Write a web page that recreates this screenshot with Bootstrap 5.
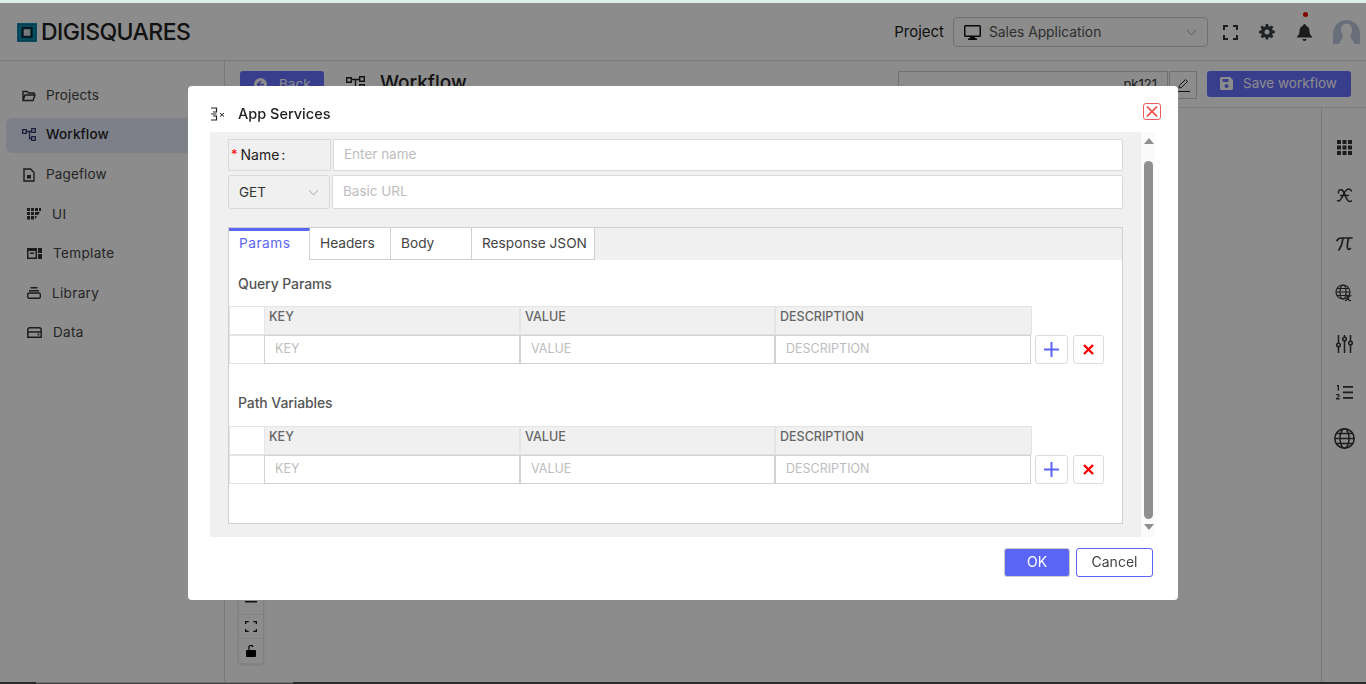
<!DOCTYPE html>
<html lang="en">
<head>
<meta charset="utf-8">
<title>App Services</title>
<link rel="stylesheet" href="https://cdn.jsdelivr.net/npm/bootstrap@5.3.0/dist/css/bootstrap.min.css">
<style>
html,body{height:684px;overflow:hidden;}
body{font-family:"Inter","Liberation Sans",sans-serif;font-size:14px;color:#333;background:#fff;}
.strip-top{height:3px;background:#dcefe6;position:relative;z-index:1060;flex:none;}
.strip-bottom{height:2px;background:#2b2b2b;position:relative;z-index:1060;flex:none;}
.strip-mid{width:257px;margin-left:36px;height:2px;background:#444;border-top:1px solid #6e6e6e;}
.shell{height:684px;}
.app-head{height:58px;border-bottom:1px solid #d9d9d9;padding:1px 6px 0 17px;flex:none;}
.logo-text{font-size:23px;font-weight:500;letter-spacing:-.55px;color:#222;margin-left:4px;line-height:1;}
.proj-label{font-size:15px;color:#222;margin-right:9px;}
.proj-select{width:255px;height:30px;border:1px solid #ccc;border-radius:4px;padding:0 10px;margin-right:15px;font-size:13.8px;color:#555;}
.proj-select svg.chev{margin-left:auto;}
.ico-fs{margin-right:21px;}
.ico-gear{margin-right:22px;}
.bell-wrap{position:relative;margin-right:21px;}
.bell-dot{position:absolute;left:6px;top:-12px;width:5px;height:5px;border-radius:50%;background:#e00;}
.body-row{min-height:0;}
.side-col{width:225px;border-right:1px solid #d9d9d9;padding-top:17px;padding-left:6px;flex:none;}
.side-item{height:35px;margin-bottom:4.5px;padding-left:16px;border-radius:6px 0 0 6px;font-size:13.5px;letter-spacing:.15px;color:#444;gap:10px;}
.side-item.on{background:#e6eafa;color:#222;font-weight:500;padding-bottom:1px;}
.side-item.sub{padding-left:21px;gap:11px;letter-spacing:.35px;}
.tool-row{height:47px;padding:10px 15px 0 15px;border-bottom:1px solid #e6e6e6;flex:none;}
.back-btn{width:84px;height:26px;background:#6671ff;color:#fff;border-radius:3px;font-size:13.5px;gap:12px;padding-left:14px;}
.wf-title{font-size:19px;font-weight:500;color:#222;margin-left:22px;gap:15px;height:24px;}
.name-box{width:270px;height:28px;border:1px solid #ccc;margin-left:auto;text-align:right;padding:3px 10px;font-size:13px;color:#333;}
.pen-box{width:28px;height:28px;border:1px solid #ccc;margin-left:1px;}
.save-btn{width:144px;height:26px;background:#6671ff;color:#fff;border-radius:3px;margin-left:10px;font-size:13.5px;gap:10px;padding:0 0 2px 13px;}
.canvas-row{min-height:0;}
.canvas-main{padding:482px 0 0 14px;}
.zoom-stack{width:24px;border-radius:2px;box-shadow:0 0 3px rgba(0,0,0,.25);}
.zoom-cell{height:24.5px;border-bottom:1px solid #eee;}
.right-rail{width:45px;border-left:1px solid #d9d9d9;padding-top:15px;flex:none;color:#333;}
.rail-cell{height:48px;}
.rail-cell.h52{height:52px;}
.rail-cell.h50{height:50px;}
.rail-cell.h46{height:46px;}
.modal-backdrop.dim{opacity:.45;}
.svc-dialog{max-width:990px;margin:86px auto 0;}
.svc-dialog .modal-content{height:514px;border:0;border-radius:4px;}
.svc-head{height:46px;padding:10px 17px 0 23px;}
.svc-title{font-size:14.5px;font-weight:500;color:#222;margin-left:13px;}
.svc-close{width:18px;height:17px;border:1px solid #f05a5a;border-radius:3px;margin:-5px 0 0 auto;padding:0;background:#fff;}
.svc-body{margin:0 23px 0 22px;height:405px;}
.svc-main{width:931px;background:#f0f0f0;padding:7px 18px 0;}
.svc-scroll{width:14px;background:#fafafa;padding:0 2.5px;}
.scroll-thumb{width:9px;height:358px;background:#8f8f8f;border-radius:5px;margin:0 auto;}
.arrow-up,.arrow-down{width:0;height:0;margin:0 auto;border-left:5px solid transparent;border-right:5px solid transparent;}
.arrow-up{border-bottom:6px solid #8f8f8f;margin-top:6px;margin-bottom:17px;}
.arrow-down{border-top:6px solid #8f8f8f;margin-top:5px;}
.field-row{gap:2px;}
.name-cell{width:103px;flex:none;height:32px;border:1px solid #d9d9d9;background:#f0f0f0;padding:0 0 1px 2px;font-size:14px;color:#222;}
.req{color:#f00;margin-right:3px;font-size:13px;}
.colon{margin-left:2px;}
.method-cell{width:102px;flex:none;height:34px;border:1px solid #d9d9d9;border-radius:3px;background:#f0f0f0;padding:0 10px;font-size:13.5px;color:#333;}
.method-cell svg{margin-left:auto;}
.svc-input.form-control{border:1px solid #d9d9d9;border-radius:2px;background:#fff;font-size:13.5px;padding:0 10px 2px;color:#333;box-shadow:none;min-height:0;}
.svc-input.h-name{height:32px;padding-left:10px;}
.svc-input.h-url{height:34px;}
.svc-input.form-control::placeholder,.kv-input.form-control::placeholder{color:#bdbdbd;opacity:1;}
.svc-panel{height:297px;margin-top:18px;border:1px solid #d0d0d0;background:#fff;}
.tab-bar{height:32px;background:#f0f0f0;}
.tab-cell{height:32px;width:81px;background:#fff;border-right:1px solid #d0d0d0;border-bottom:1px solid #d0d0d0;font-size:13.7px;color:#444;padding-left:10px;}
.tab-cell.wide{width:123px;}
.tab-cell.on{border-top:3px solid #5b66f6;border-bottom:0;color:#5b66f6;padding-bottom:4px;letter-spacing:.5px;}
.sec-label{font-size:14px;color:#555;font-weight:500;letter-spacing:-.1px;padding:1px 0 0 9px;height:46px;}
.sec-label.second{height:62px;padding-top:15px;}
.kv-row{height:29px;}
.kv-blank{width:35px;flex:none;border:1px solid #e4e4e4;border-right:0;background:#fff;}
.kv-head{background:#f0f0f0;border:1px solid #e4e4e4;font-size:12.5px;font-weight:500;color:#666;padding:1px 0 0 4px;line-height:17px;}
.kv-w1{width:256px;flex:none;}.kv-w2{width:255px;flex:none;}.kv-w3{width:257px;flex:none;}
.kv-input.form-control{border:1px solid #d2d2d2;border-radius:0;height:29px;min-height:0;font-size:12.5px;padding:0 0 2px 10px;box-shadow:none;}
.kv-input.kv-w3{width:256px;}
.kv-btn.btn{width:33px;height:29px;padding:0;border:1px solid #dcdcdc;border-radius:3px;background:#fff;flex:none;}
.kv-btn.one{margin-left:4px;}.kv-btn.two{width:31px;margin-left:5px;}
.svc-foot{padding:11px 25px 0 0;gap:6px;}
.ok-btn.btn{width:66px;height:29px;padding:0 0 2px;background:#5b66f6;color:#fff;border:1px solid #ccc;border-radius:3px;font-size:14px;}
.cancel-btn.btn{width:77px;height:29px;padding:0 0 2px;background:#fff;color:#444;border:1px solid #5b66f6;border-radius:3px;font-size:14px;}
</style>
</head>
<body>
<div class="shell d-flex flex-column">
  <div class="strip-top"></div>
  <header class="app-head d-flex align-items-center">
    <svg width="20" height="19" viewBox="0 0 20 19"><rect width="20" height="19" fill="#0b8fb5"/><rect x="1.500" y="1.500" width="17" height="16" fill="none" stroke="#0a6f8f" stroke-width="1"/><rect x="5.500" y="5" width="9" height="9" fill="#d6dde0" stroke="#07303f" stroke-width="2.400"/></svg>
    <span class="logo-text">DIGISQUARES</span>
    <div class="ms-auto d-flex align-items-center">
      <span class="proj-label">Project</span>
      <div class="proj-select d-flex align-items-center">
        <svg class="me-2" width="17" height="15" viewBox="0 0 17 15"><path fill="#111" d="M1.500 0h14A1.500 1.500 0 0 1 17 1.500v9a1.500 1.500 0 0 1-1.500 1.500H11l.4 1.500h1.600V15H4v-1.500h1.600L6 12H1.500A1.500 1.500 0 0 1 0 10.500v-9A1.500 1.500 0 0 1 1.500 0zm0 1.500v9h14v-9z"/></svg>
        <span>Sales Application</span>
        <svg class="chev" width="11" height="7" viewBox="0 0 11 7"><path d="M1 1l4.500 5L10 1" fill="none" stroke="#aaa" stroke-width="1"/></svg>
      </div>
      <svg class="ico-fs" width="15" height="15" viewBox="0 0 15 15"><path d="M1 5V1h4M10 1h4v4M14 10v4h-4M5 14H1v-4" fill="none" stroke="#333" stroke-width="2"/></svg>
      <svg class="ico-gear" width="16" height="16" viewBox="0 0 16 16"><path fill="#3a3f45" d="M6.800 0h2.400l.4 2.200 1.200.5 1.900-1.300 1.700 1.700-1.300 1.900.5 1.200 2.200.4v2.400l-2.200.4-.5 1.200 1.300 1.900-1.700 1.700-1.900-1.300-1.200.5-.4 2.200H6.800l-.4-2.200-1.200-.5-1.900 1.300-1.700-1.700 1.300-1.900-.5-1.200L0 9.200V6.800l2.200-.4.5-1.200-1.300-1.900 1.700-1.700 1.900 1.300 1.200-.5zM8 5.500a2.500 2.500 0 1 0 0 5 2.500 2.500 0 0 0 0-5z"/></svg>
      <div class="bell-wrap">
        <span class="bell-dot"></span>
        <svg class="d-block" width="15" height="17" viewBox="0 0 15 17"><path fill="#333" d="M7.500 0a1.300 1.300 0 0 1 1.300 1.300v.5c2.700.6 3.700 2.800 3.700 5.200 0 3 1 4.300 2.500 5.500v1H0v-1c1.500-1.200 2.500-2.500 2.500-5.500 0-2.400 1-4.600 3.700-5.200v-.5A1.300 1.300 0 0 1 7.500 0zM5.500 15h4a2 2 0 0 1-4 0z"/></svg>
      </div>
      <svg width="27" height="24" viewBox="0 0 27 24"><path fill="#c0cbdf" d="M0 24V13.500a13.500 13.500 0 0 1 27 0V24z"/><path fill="#fff" d="M13.500 3.500c3.500 0 5.500 3 5.500 6.500 0 3-1.500 5-1.500 6.500 0 2 2.500 3 3.500 7.500H6.500c1-4.500 3.500-5.500 3.500-7.500 0-1.500-2-3.500-2-6.500 0-3.500 2-6.500 5.500-6.500z"/></svg>
    </div>
  </header>
  <div class="body-row d-flex flex-grow-1">
    <nav class="side-col">
      <div class="side-item d-flex align-items-center"><svg width="14" height="12" viewBox="0 0 14 12"><path fill="none" stroke="#333" stroke-width="1.400" d="M1 10.500V1.500h4l1.500 1.500H12v2M1 10.500h10l2-5.500H3z"/></svg><span>Projects</span></div>
      <div class="side-item on d-flex align-items-center"><svg width="14" height="13" viewBox="0 0 14 13"><path fill="none" stroke="#2a3a6a" stroke-width="1.300" d="M.7 1.700h3.600v3.600H.7zM9.700.7h3.600v3.600H9.700zM9.700 8.700h3.600v3.600H9.700zM4.300 3.500h5.400M7.500 3.500v7h2.200"/></svg><span>Workflow</span></div>
      <div class="side-item d-flex align-items-center"><svg width="14" height="14" viewBox="0 0 14 14"><path fill="none" stroke="#333" stroke-width="1.400" d="M2 1h6.500L12 4.500V13H2z"/><rect x="5" y="7" width="4" height="3.500" fill="#333"/></svg><span>Pageflow</span></div>
      <div class="side-item sub d-flex align-items-center"><svg width="14" height="12" viewBox="0 0 14 12"><path fill="#333" d="M0 0h3v3H0zM4 0h3v3H4zM8 0h3v3H8zM12 0h2v3h-2zM0 4h3v3H0zM4 4h3v3H4zM8 4h5l-2 3H8zM0 8h3v3.500H0zM4 8h3v3.500H4zM8 8h2l-2 3.500z"/></svg><span>UI</span></div>
      <div class="side-item sub d-flex align-items-center"><svg width="15" height="11" viewBox="0 0 15 11"><path fill="#333" d="M0 0h10v11H0zM1.500 3v6.500h7V3zM3 4.500h4v1.500H3zM11 0h4v5h-4zM11 6h4v5h-4z"/></svg><span>Template</span></div>
      <div class="side-item sub d-flex align-items-center"><svg width="14" height="12" viewBox="0 0 14 12"><path fill="#333" d="M3.500 0h7v1.500h-7zM2 3h10v1.500H2z"/><rect x=".7" y="6" width="12.600" height="5.300" rx="1.500" fill="none" stroke="#333" stroke-width="1.400"/></svg><span>Library</span></div>
      <div class="side-item sub d-flex align-items-center"><svg width="15" height="11" viewBox="0 0 15 11"><path fill="none" stroke="#333" stroke-width="1.500" d="M.8 5V3A2.200 2.200 0 0 1 3 .8h9A2.200 2.200 0 0 1 14.200 3v2M.8 5h13.400v5.200H.8z"/><circle cx="11.500" cy="7.600" r="1" fill="#333"/></svg><span>Data</span></div>
    </nav>
    <div class="flex-grow-1 d-flex flex-column" style="min-width:0">
      <div class="tool-row d-flex">
        <div class="back-btn d-flex align-items-center"><svg width="13" height="13" viewBox="0 0 13 13"><circle cx="6.500" cy="6.500" r="6.500" fill="#fff"/><path d="M7 3L3.500 6.500 7 10M4 6.500h6" stroke="#5b66f6" stroke-width="1.500" fill="none"/></svg><span>Back</span></div>
        <div class="wf-title d-flex align-items-center"><svg width="19" height="14" viewBox="0 0 19 14"><path fill="none" stroke="#222" stroke-width="1.400" d="M.7 1.700h4.600v4.600H.7zM13.700.7h4.600v4.600h-4.600zM13.700 8.700h4.600v4.600h-4.600zM5.300 3.500h8.400M9.500 3.500v7.500h4.200"/></svg><span>Workflow</span></div>
        <div class="name-box">pk121</div>
        <div class="pen-box d-flex align-items-center justify-content-center"><svg width="15" height="15" viewBox="0 0 15 15"><path fill="none" stroke="#222" d="M3 10l.5-2.500L9.500 1.500l2 2-6 6zM1 13.500h13"/></svg></div>
        <div class="save-btn d-flex align-items-center"><svg width="13" height="13" viewBox="0 0 13 13"><path fill="#fff" d="M1.500 0H10l3 3v8.500a1.500 1.500 0 0 1-1.500 1.500h-10A1.500 1.500 0 0 1 0 11.500v-10A1.500 1.500 0 0 1 1.500 0zM2.500 2v3h6V2zM6.500 7a2 2 0 1 0 0 4 2 2 0 0 0 0-4z"/></svg><span>Save workflow</span></div>
      </div>
      <div class="canvas-row d-flex flex-grow-1">
        <div class="canvas-main flex-grow-1">
          <div class="zoom-stack">
            <div class="zoom-cell d-flex align-items-center justify-content-center"><svg width="12" height="2"><rect width="12" height="1.500" fill="#222"/></svg></div>
            <div class="zoom-cell d-flex align-items-center justify-content-center"><svg width="12" height="11" viewBox="0 0 12 11"><path d="M.7 3V.7h3M8.300.7h3V3M11.300 8v2.300h-3M3.700 10.300h-3V8" fill="none" stroke="#111" stroke-width="1.300"/></svg></div>
            <div class="zoom-cell d-flex align-items-center justify-content-center"><svg width="10" height="12" viewBox="0 0 10 12"><path fill="#000" d="M1 5h8a1 1 0 0 1 1 1v5a1 1 0 0 1-1 1H1a1 1 0 0 1-1-1V6a1 1 0 0 1 1-1z"/><path d="M3 5V3a2 2 0 0 1 4-1" fill="none" stroke="#000" stroke-width="1.200"/></svg></div>
          </div>
        </div>
        <aside class="right-rail d-flex flex-column align-items-center">
          <div class="rail-cell d-flex align-items-center"><svg width="15" height="15" viewBox="0 0 15 15"><path fill="#333" d="M0 0h4v4H0zM5.500 0h4v4h-4zM11 0h4v4h-4zM0 5.500h4v4H0zM5.500 5.500h4v4h-4zM11 5.500h4v4h-4zM0 11h4v4H0zM5.500 11h4v4h-4zM11 11h4v4h-4z"/></svg></div>
          <div class="rail-cell d-flex align-items-center"><svg width="17" height="15" viewBox="0 0 17 15"><g fill="none" stroke="#333" stroke-width="1.500" stroke-linecap="round"><path d="M2.500 5C2 2.500 4 1 6 2c2 1.200 3 5 4.500 8.500 1 2.500 3 3.500 5 2.500"/><path d="M15.500 3c-.8-2-3-2.500-5-1C8.500 3.500 7 7.500 5 11c-1 1.800-2.500 2.500-3.500 1.500"/><path d="M4.500 7.500h8"/></g></svg></div>
          <div class="rail-cell d-flex align-items-center"><svg width="17" height="15" viewBox="0 0 17 15"><g fill="none" stroke="#333" stroke-width="1.700" stroke-linecap="round"><path d="M1 4.500C2 2.500 3.500 2 5.500 2H16"/><path d="M7 2.500C6.500 7 5 11 3 14"/><path d="M12.500 2.500c-1 4-1.500 7-1 9.500.3 1.500 1.800 1.800 3 .5"/></g></svg></div>
          <div class="rail-cell h52 d-flex align-items-center"><svg width="18" height="18" viewBox="0 0 18 18"><g fill="none" stroke="#333" stroke-width="1.200"><circle cx="8" cy="8" r="7"/><ellipse cx="8" cy="8" rx="3" ry="7"/><path d="M1 8h14M2 4.500h12M2 11.500h12"/></g><path d="M10.500 11.500c1.500-.5 2 .5 2.500 2.500s1.500 3 3 2.500M16.500 11.500c-1.500 0-2.500 1-3.500 2.500s-1.500 3-3 2.500" fill="#8c8c8c" stroke="#333" stroke-width="1.200"/></svg></div>
          <div class="rail-cell h50 d-flex align-items-center"><svg width="17" height="18" viewBox="0 0 17 18"><g fill="none" stroke="#333" stroke-width="1.500"><path d="M2.500 0v8M2.500 12v6M8.500 0v2M8.500 6v12M14.500 0v6M14.500 10v8"/><circle cx="2.500" cy="10" r="1.800"/><circle cx="8.500" cy="4" r="1.800"/><circle cx="14.500" cy="8" r="1.800"/></g></svg></div>
          <div class="rail-cell h46 d-flex align-items-center"><svg width="17" height="15" viewBox="0 0 17 15"><path fill="#333" d="M7 1h10v1.700H7zM7 6.500h10v1.700H7zM7 12h10v1.700H7zM1 0h2v5.500H1.700V1.500H1zM0 9.500c.3-.8 3.800-1 3.800 1 0 1-1.500 1.800-2.300 2.700h2.400V14.500H0v-1l2.500-2.600c.3-.6-1.200-.8-1.700-.1z"/></svg></div>
          <div class="rail-cell h46 d-flex align-items-center"><svg width="21" height="21" viewBox="0 0 21 21"><g fill="none" stroke="#333" stroke-width="1.500"><circle cx="10.500" cy="10.500" r="9.700"/><ellipse cx="10.500" cy="10.500" rx="4.500" ry="9.700"/><path d="M.8 10.500h19.400M2.300 5.500h16.400M2.300 15.500h16.400"/></g></svg></div>
        </aside>
      </div>
    </div>
  </div>
  <div class="strip-bottom"><div class="strip-mid"></div></div>
</div>

<div class="modal-backdrop dim"></div>
<div class="modal d-block" tabindex="-1">
  <div class="modal-dialog svc-dialog">
    <div class="modal-content">
      <div class="svc-head d-flex align-items-center">
        <svg width="14" height="14" viewBox="0 0 14 14"><path fill="none" stroke="#222" stroke-width="1.200" d="M0 1h5.500v4H2M0 7h5.500M0 13h5.500V9H2"/><path fill="none" stroke="#222" d="M9 6l4 3.500M13 6L9 9.500"/></svg>
        <span class="svc-title">App Services</span>
        <button type="button" class="svc-close d-flex align-items-center justify-content-center" aria-label="Close"><svg width="12" height="11" viewBox="0 0 12 11"><path d="M1 .5l10 10M11 .5l-10 10" stroke="#f05a5a" stroke-width="1.800"/></svg></button>
      </div>
      <div class="svc-body d-flex">
        <div class="svc-main">
          <div class="field-row d-flex">
            <div class="name-cell d-flex align-items-center"><span class="req">*</span>Name<span class="colon">:</span></div>
            <input class="svc-input h-name form-control flex-grow-1" placeholder="Enter name">
          </div>
          <div class="field-row d-flex mt-1">
            <div class="method-cell d-flex align-items-center"><span>GET</span><svg width="11" height="7" viewBox="0 0 11 7"><path d="M1 1l4.500 5L10 1" fill="none" stroke="#aaa" stroke-width="1"/></svg></div>
            <input class="svc-input h-url form-control flex-grow-1" placeholder="Basic URL">
          </div>
          <div class="svc-panel">
            <div class="tab-bar d-flex">
              <div class="tab-cell on d-flex align-items-center">Params</div>
              <div class="tab-cell d-flex align-items-center">Headers</div>
              <div class="tab-cell d-flex align-items-center">Body</div>
              <div class="tab-cell wide d-flex align-items-center">Response JSON</div>
            </div>
            <div class="sec-label d-flex align-items-center">Query Params</div>
            <div class="kv-row d-flex"><div class="kv-blank"></div><div class="kv-head kv-w1">KEY</div><div class="kv-head kv-w2">VALUE</div><div class="kv-head kv-w3">DESCRIPTION</div></div>
            <div class="kv-row d-flex"><div class="kv-blank"></div><input class="kv-input kv-w1 form-control" placeholder="KEY"><input class="kv-input kv-w2 form-control" placeholder="VALUE"><input class="kv-input kv-w3 form-control" placeholder="DESCRIPTION">
              <button class="kv-btn one btn d-flex align-items-center justify-content-center" aria-label="Add"><svg width="15" height="15" viewBox="0 0 15 15"><path d="M7.500 0v15M0 7.500h15" stroke="#5b66f6" stroke-width="2"/></svg></button>
              <button class="kv-btn two btn d-flex align-items-center justify-content-center" aria-label="Remove"><svg width="11" height="11" viewBox="0 0 11 11"><path d="M1 1l9 9M10 1l-9 9" stroke="#f00" stroke-width="2.400"/></svg></button>
            </div>
            <div class="sec-label second d-flex align-items-center">Path Variables</div>
            <div class="kv-row d-flex"><div class="kv-blank"></div><div class="kv-head kv-w1">KEY</div><div class="kv-head kv-w2">VALUE</div><div class="kv-head kv-w3">DESCRIPTION</div></div>
            <div class="kv-row d-flex"><div class="kv-blank"></div><input class="kv-input kv-w1 form-control" placeholder="KEY"><input class="kv-input kv-w2 form-control" placeholder="VALUE"><input class="kv-input kv-w3 form-control" placeholder="DESCRIPTION">
              <button class="kv-btn one btn d-flex align-items-center justify-content-center" aria-label="Add"><svg width="15" height="15" viewBox="0 0 15 15"><path d="M7.500 0v15M0 7.500h15" stroke="#5b66f6" stroke-width="2"/></svg></button>
              <button class="kv-btn two btn d-flex align-items-center justify-content-center" aria-label="Remove"><svg width="11" height="11" viewBox="0 0 11 11"><path d="M1 1l9 9M10 1l-9 9" stroke="#f00" stroke-width="2.400"/></svg></button>
            </div>
          </div>
        </div>
        <div class="svc-scroll">
          <div class="arrow-up"></div>
          <div class="scroll-thumb"></div>
          <div class="arrow-down"></div>
        </div>
      </div>
      <div class="svc-foot d-flex justify-content-end">
        <button class="ok-btn btn">OK</button>
        <button class="cancel-btn btn">Cancel</button>
      </div>
    </div>
  </div>
</div>
<script src="https://cdn.jsdelivr.net/npm/bootstrap@5.3.0/dist/js/bootstrap.bundle.min.js"></script>
</body>
</html>
